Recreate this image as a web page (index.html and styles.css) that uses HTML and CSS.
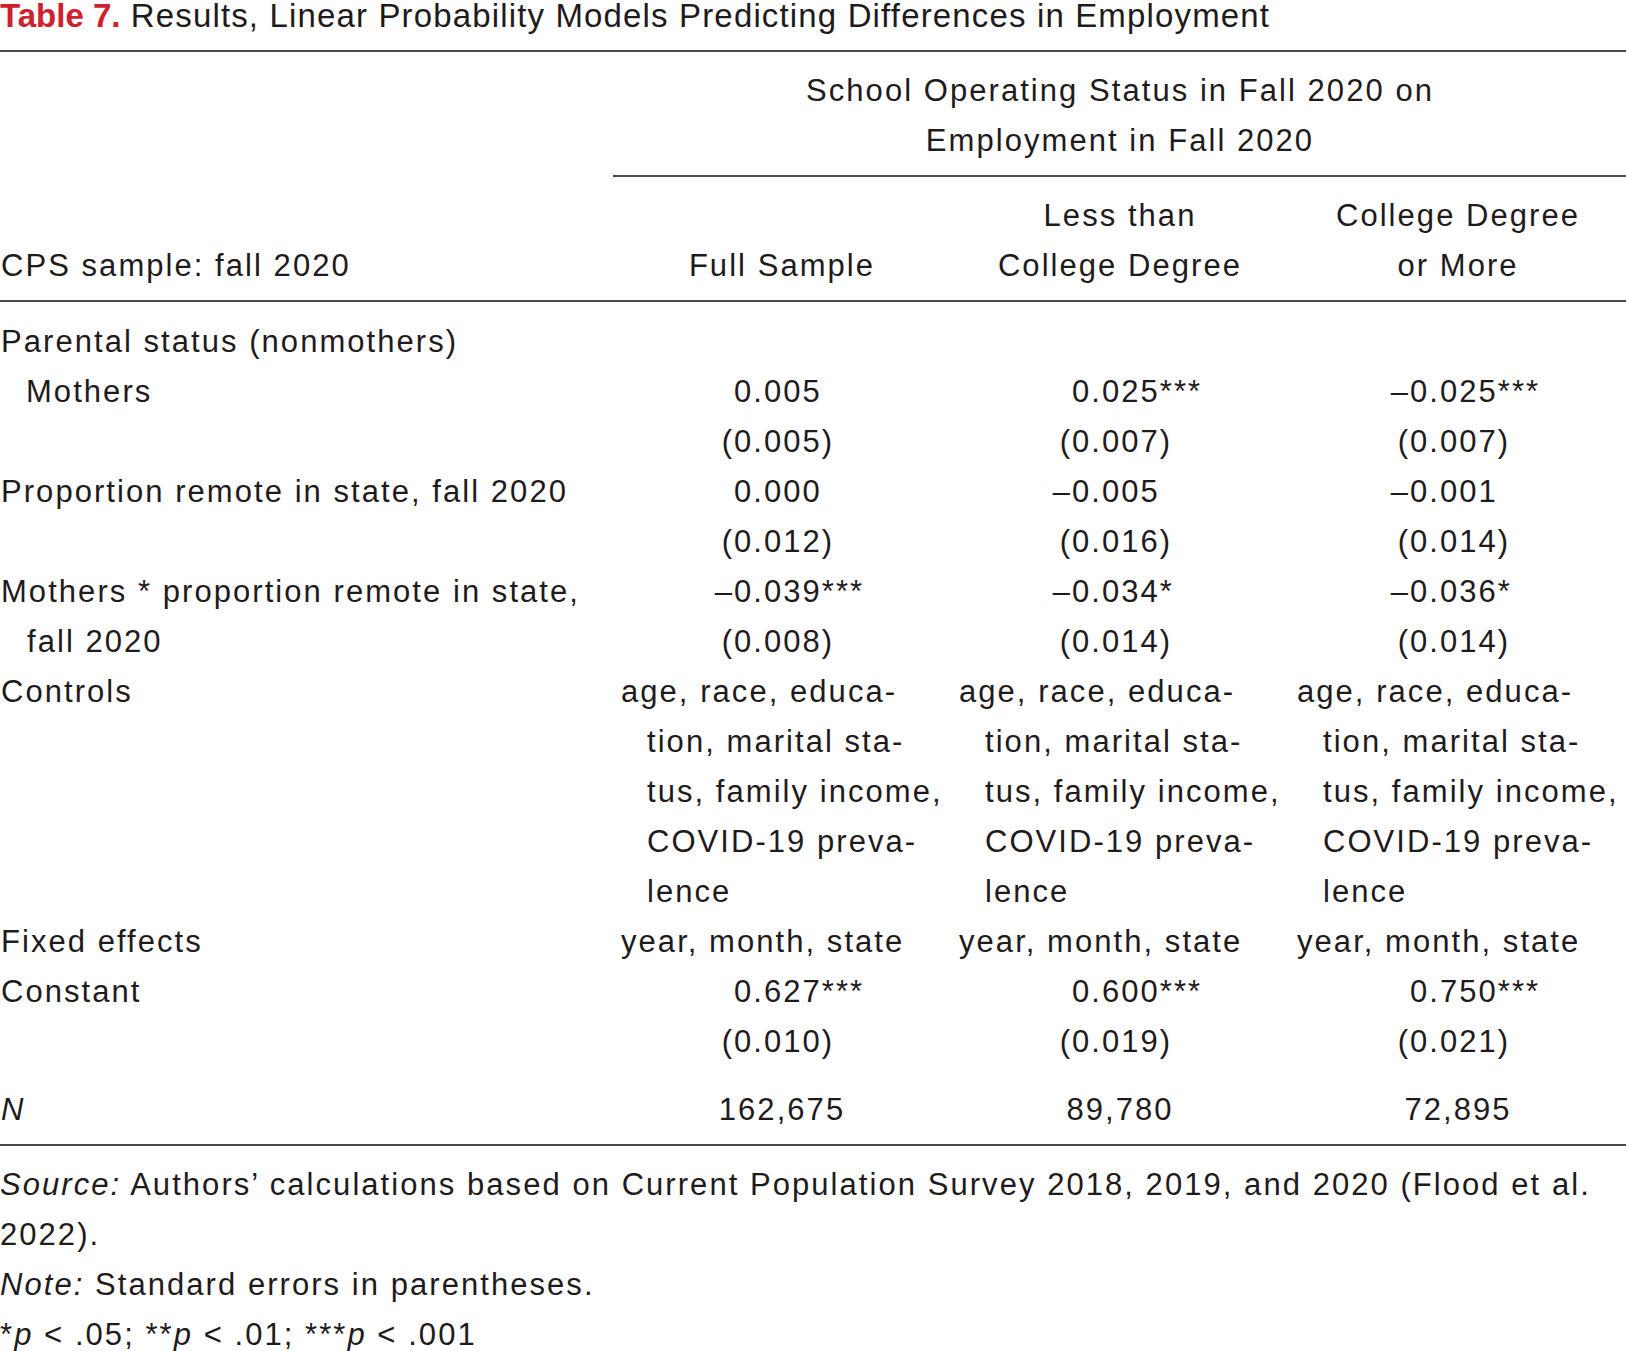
FILE: index.html
```html
<!DOCTYPE html>
<html lang="en">
<head>
<meta charset="utf-8">
<title>Table 7. Results, Linear Probability Models</title>
<link rel="stylesheet" href="styles.css">
</head>
<body>
<div class="page">
  <h1 class="caption"><span class="caption-label">Table 7.</span> Results, Linear Probability Models Predicting Differences in Employment</h1>
  <table class="results">
    <colgroup>
      <col class="col-stub">
      <col class="col-data">
      <col class="col-data">
      <col class="col-data">
    </colgroup>
    <thead>
      <tr class="row-spanner">
        <th class="blank"></th>
        <th class="spanner" colspan="3">School Operating Status in Fall 2020 on<br>Employment in Fall 2020</th>
      </tr>
      <tr class="row-heads">
        <th class="stub-head">CPS sample: fall 2020</th>
        <th class="col-head">Full Sample</th>
        <th class="col-head">Less than<br>College Degree</th>
        <th class="col-head">College Degree<br>or More</th>
      </tr>
    </thead>
    <tbody>
      <tr class="row-first">
        <td class="stub">Parental status (nonmothers)</td>
        <td></td><td></td><td></td>
      </tr>
      <tr>
        <td class="stub indent">Mothers</td>
        <td class="num"><span class="pre"></span>0.005</td>
        <td class="num"><span class="pre"></span>0.025***</td>
        <td class="num"><span class="pre">–</span>0.025***</td>
      </tr>
      <tr>
        <td class="stub"></td>
        <td class="num"><span class="pre">(</span>0.005)</td>
        <td class="num"><span class="pre">(</span>0.007)</td>
        <td class="num"><span class="pre">(</span>0.007)</td>
      </tr>
      <tr>
        <td class="stub">Proportion remote in state, fall 2020</td>
        <td class="num"><span class="pre"></span>0.000</td>
        <td class="num"><span class="pre">–</span>0.005</td>
        <td class="num"><span class="pre">–</span>0.001</td>
      </tr>
      <tr>
        <td class="stub"></td>
        <td class="num"><span class="pre">(</span>0.012)</td>
        <td class="num"><span class="pre">(</span>0.016)</td>
        <td class="num"><span class="pre">(</span>0.014)</td>
      </tr>
      <tr>
        <td class="stub hang" rowspan="2">Mothers * proportion remote in state,<br>fall 2020</td>
        <td class="num"><span class="pre">–</span>0.039***</td>
        <td class="num"><span class="pre">–</span>0.034*</td>
        <td class="num"><span class="pre">–</span>0.036*</td>
      </tr>
      <tr>
        <td class="num"><span class="pre">(</span>0.008)</td>
        <td class="num"><span class="pre">(</span>0.014)</td>
        <td class="num"><span class="pre">(</span>0.014)</td>
      </tr>
      <tr>
        <td class="stub">Controls</td>
        <td class="text hang">age, race, educa-<br>tion, marital sta-<br>tus, family income,<br>COVID-19 preva-<br>lence</td>
        <td class="text hang">age, race, educa-<br>tion, marital sta-<br>tus, family income,<br>COVID-19 preva-<br>lence</td>
        <td class="text hang">age, race, educa-<br>tion, marital sta-<br>tus, family income,<br>COVID-19 preva-<br>lence</td>
      </tr>
      <tr>
        <td class="stub">Fixed effects</td>
        <td class="text">year, month, state</td>
        <td class="text">year, month, state</td>
        <td class="text">year, month, state</td>
      </tr>
      <tr>
        <td class="stub">Constant</td>
        <td class="num"><span class="pre"></span>0.627***</td>
        <td class="num"><span class="pre"></span>0.600***</td>
        <td class="num"><span class="pre"></span>0.750***</td>
      </tr>
      <tr>
        <td class="stub"></td>
        <td class="num"><span class="pre">(</span>0.010)</td>
        <td class="num"><span class="pre">(</span>0.019)</td>
        <td class="num"><span class="pre">(</span>0.021)</td>
      </tr>
      <tr class="row-last">
        <td class="stub"><em>N</em></td>
        <td class="count">162,675</td>
        <td class="count">89,780</td>
        <td class="count">72,895</td>
      </tr>
    </tbody>
  </table>
  <div class="notes">
    <p><em>Source:</em> Authors’ calculations based on Current Population Survey 2018, 2019, and 2020 (Flood et al.<br>2022).</p>
    <p><em>Note:</em> Standard errors in parentheses.</p>
    <p>*<em>p</em> &lt; .05; **<em>p</em> &lt; .01; ***<em>p</em> &lt; .001</p>
  </div>
</div>
</body>
</html>
```

FILE: styles.css
```css
* {
  box-sizing: border-box;
}

html,
body {
  margin: 0;
  padding: 0;
  background: #ffffff;
}

body {
  font-family: "Liberation Sans", Arial, sans-serif;
  font-size: 31px;
  letter-spacing: 2.05px;
  color: #1f1b1c;
}

.page {
  width: 1626px;
}

.caption {
  margin: 0 0 18px;
  font-size: 33px;
  line-height: 32px;
  font-weight: normal;
  letter-spacing: 1.15px;
  white-space: nowrap;
}

.caption-label {
  color: #d0202e;
  font-weight: bold;
  letter-spacing: 0;
}

.results {
  width: 1626px;
  table-layout: fixed;
  border-collapse: separate;
  border-spacing: 0;
}

.col-stub {
  width: 613px;
}

.col-data {
  width: 338px;
}

.results th,
.results td {
  padding: 0;
  line-height: 50px;
  font-weight: normal;
  text-align: left;
  vertical-align: top;
  white-space: nowrap;
}

.results .row-spanner th {
  border-top: 2px solid #4a4a4a;
  padding-top: 14px;
}

.results .spanner {
  text-align: center;
  padding-bottom: 9px;
  border-bottom: 2px solid #4a4a4a;
}

.results .row-heads th {
  padding-top: 14px;
  padding-bottom: 9px;
  vertical-align: bottom;
  border-bottom: 2px solid #4a4a4a;
}

.results .row-heads .col-head {
  text-align: center;
}

.results .stub-head {
  padding-left: 1px;
}

.results .row-first td {
  padding-top: 15px;
}

.results .stub {
  padding-left: 1px;
}

.results .stub.indent {
  padding-left: 26px;
}

.results .stub.hang {
  padding-left: 27px;
  text-indent: -26px;
}

.results .num {
  padding-left: 101px;
}

.pre {
  display: inline-block;
  width: 20px;
  text-align: right;
  text-indent: 0;
}

.results .text {
  padding-left: 8px;
}

.results .text.hang {
  padding-left: 34px;
  text-indent: -26px;
}

.results .count {
  text-align: center;
}

.results .row-last td {
  padding-top: 18px;
  padding-bottom: 9px;
  border-bottom: 2px solid #4a4a4a;
}

.notes {
  padding-top: 14px;
}

.notes p {
  margin: 0;
  line-height: 50px;
  white-space: nowrap;
}
```
